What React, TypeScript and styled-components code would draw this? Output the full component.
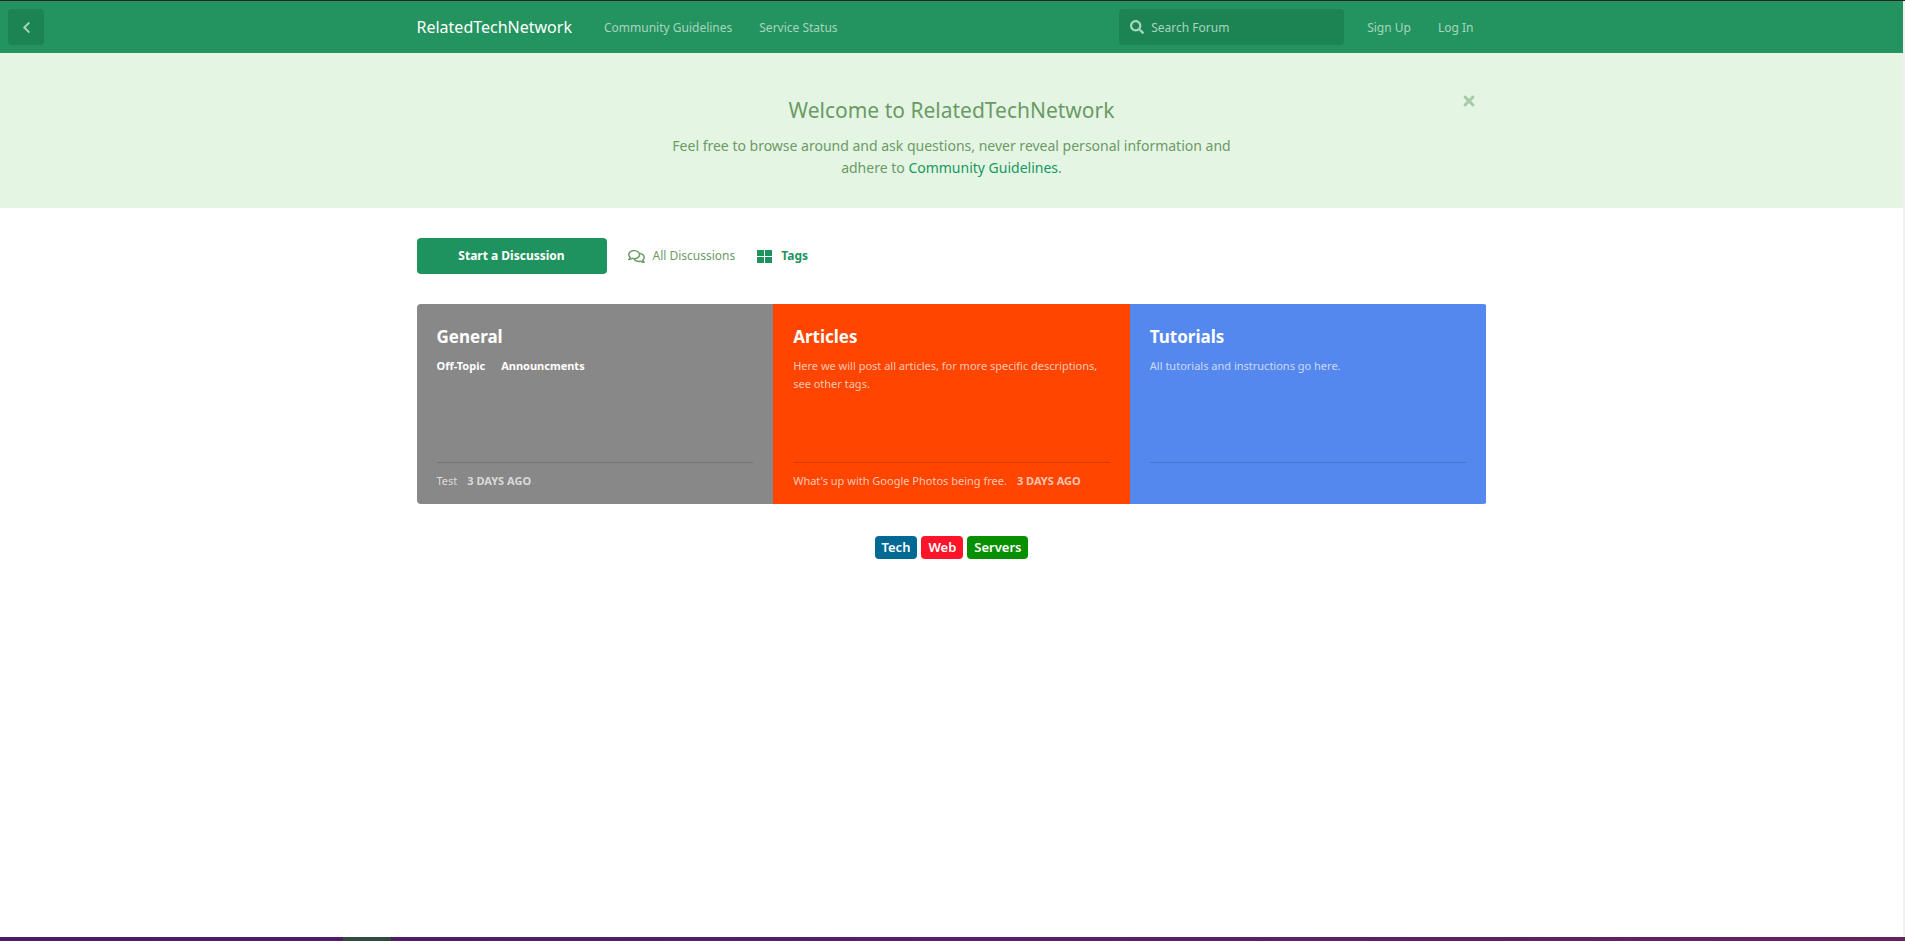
import React from "react";
import styled, { createGlobalStyle, css } from "styled-components";
import { FaChevronLeft, FaSearch, FaTimes, FaRegComments } from "react-icons/fa";

const green = "#1f935f";
const muted = "#6a9b66";
const onHeader = "#a7d4bf";

const GlobalStyle = createGlobalStyle`
  *, *::before, *::after { box-sizing: border-box; }
  body {
    margin: 0;
    background: #fff;
    color: ${muted};
    font-family: "Noto Sans", "Open Sans", sans-serif;
    font-size: 12px;
    line-height: 18px;
  }
  a { color: inherit; text-decoration: none; }
  button, input { font: inherit; }
  h1, h2, p, ul { margin: 0; padding: 0; }
`;

const Window = styled.div`
  display: flex;
  flex-direction: column;
  min-height: 100vh;
  border-top: 1px solid #262626;
`;

const Page = styled.div`
  flex: 1;
  border-right: 2px solid #f0f0f0;
`;

const Taskbar = styled.div`
  display: flex;
  height: 4px;
  padding-left: 18%;
  background: linear-gradient(90deg, #4d1a6a, #521f6c 40%, #66225f);
`;

const TaskbarItem = styled.div`
  width: 48px;
  background: #304a3f;
`;

const Container = styled.div`
  position: relative;
  max-width: 1100px;
  margin: 0 auto;
  padding: 0 15px;
`;

const Header = styled.header`
  position: relative;
  padding: 8px 0;
  background: #239460;
  color: ${onHeader};
`;

const HeaderRow = styled(Container)`
  display: flex;
  align-items: center;
  height: 36px;
  line-height: 36px;
`;

const BackButton = styled.button`
  position: absolute;
  z-index: 1;
  top: 8px;
  left: 8px;
  display: grid;
  place-items: center;
  width: 36px;
  height: 36px;
  padding: 0;
  border: 0;
  border-radius: 4px;
  background: #1c8453;
  color: ${onHeader};
  font-size: 13px;
`;

const Logo = styled.h1`
  margin-right: 32px;
  color: #fff;
  font-size: 16px;
  font-weight: 400;
`;

const HeaderNav = styled.nav`
  display: flex;
  gap: 27px;
  padding-top: 2px;
`;

const Search = styled.label`
  display: flex;
  align-items: center;
  gap: 7px;
  width: 225px;
  height: 36px;
  margin: 0 23px 0 auto;
  padding: 0 11px;
  border-radius: 4px;
  background: #1c8453;
  svg { flex: none; font-size: 14px; }
`;

const SearchInput = styled.input`
  flex: 1;
  min-width: 0;
  padding: 2px 0 0;
  border: 0;
  outline: 0;
  background: none;
  color: #fff;
  &::placeholder { color: ${onHeader}; opacity: 1; }
`;

const Session = styled(HeaderNav)`
  padding-right: 13px;
`;

const Hero = styled.section`
  padding: 43px 0 29px;
  background: #e5f5e3;
  text-align: center;
`;

const HeroTitle = styled.h2`
  margin-bottom: 11px;
  font-size: 21px;
  font-weight: 400;
  line-height: 28px;
`;

const HeroText = styled.p`
  max-width: 600px;
  margin: 0 auto;
  font-size: 14px;
  line-height: 22px;
  a { color: #17985f; }
`;

const CloseButton = styled.button`
  position: absolute;
  top: -13px;
  right: 15px;
  display: grid;
  place-items: center;
  width: 36px;
  height: 36px;
  padding: 0;
  border: 0;
  background: none;
  color: #a8c9a5;
  font-size: 16px;
`;

const Toolbar = styled.div`
  display: flex;
  align-items: center;
  gap: 21px;
  margin: 30px 0;
`;

const StartButton = styled.button`
  width: 190px;
  height: 36px;
  padding: 0;
  border: 0;
  border-radius: 4px;
  background: ${green};
  color: #fff;
  font-weight: 700;
`;

const ViewLink = styled.a<{ $active?: boolean }>`
  display: flex;
  align-items: center;
  gap: 8px;
  line-height: 36px;
  svg { width: 17px; height: 15px; }
  ${(p) => p.$active && css`color: ${green}; font-weight: 700;`}
`;

const Tiles = styled.ul`
  display: grid;
  grid-template-columns: repeat(3, 1fr);
  overflow: hidden;
  border-radius: 4px;
  list-style: none;
`;

const Tile = styled.li<{ $color: string }>`
  display: flex;
  flex-direction: column;
  min-height: 200px;
  padding: 21px 20px 0;
  background: ${(p) => p.$color};
  color: rgba(255, 255, 255, 0.7);
  font-size: 11px;
`;

const TileTitle = styled.h2`
  margin-bottom: 8px;
  color: #fff;
  font-size: 17px;
  font-weight: 700;
  line-height: 24px;
`;

const TileChildren = styled.div`
  display: flex;
  gap: 16px;
  color: #fff;
  font-weight: 700;
`;

const TileFooter = styled.a`
  display: flex;
  gap: 10px;
  height: 42px;
  margin-top: auto;
  padding-top: 9px;
  border-top: 1px solid rgba(0, 0, 0, 0.15);
`;

const Time = styled.time`
  font-weight: 700;
  text-transform: uppercase;
`;

const Cloud = styled.nav`
  display: flex;
  justify-content: center;
  gap: 4px;
  padding: 32px 0;
`;

const Label = styled.a<{ $color: string }>`
  padding: 0 7px;
  border-radius: 4px;
  background: ${(p) => p.$color};
  color: #fff;
  font-size: 13px;
  font-weight: 600;
  line-height: 23px;
`;

const GridIcon = () => (
  <svg viewBox="0 0 17 15" fill="currentColor" shapeRendering="crispEdges" aria-hidden="true">
    <path d="M1 1h7v6H1zM9 1h7v6H9zM1 8h7v6H1zM9 8h7v6H9z" />
  </svg>
);

type TileData = {
  title: string;
  color: string;
  description?: string;
  children?: string[];
  last?: { title: string; time: string };
};

const tiles: TileData[] = [
  { title: "General", color: "#888888", children: ["Off-Topic", "Announcments"], last: { title: "Test", time: "3 days ago" } },
  {
    title: "Articles",
    color: "#ff4500",
    description: "Here we will post all articles, for more specific descriptions, see other tags.",
    last: { title: "What's up with Google Photos being free.", time: "3 days ago" },
  },
  { title: "Tutorials", color: "#5588ee", description: "All tutorials and instructions go here." },
];

const labels = [
  { name: "Tech", color: "#006994" },
  { name: "Web", color: "#ff1429" },
  { name: "Servers", color: "#089000" },
];

export default function App() {
  return (
    <Window>
      <GlobalStyle />
      <Page>
        <Header>
          <BackButton aria-label="Back"><FaChevronLeft /></BackButton>
          <HeaderRow>
            <Logo><a href="#home">RelatedTechNetwork</a></Logo>
            <HeaderNav>
              <a href="#guidelines">Community Guidelines</a>
              <a href="#status">Service Status</a>
            </HeaderNav>
            <Search>
              <FaSearch />
              <SearchInput type="search" placeholder="Search Forum" aria-label="Search Forum" />
            </Search>
            <Session>
              <a href="#signup">Sign Up</a>
              <a href="#login">Log In</a>
            </Session>
          </HeaderRow>
        </Header>

        <Hero>
          <Container>
            <CloseButton aria-label="Dismiss"><FaTimes /></CloseButton>
            <HeroTitle>Welcome to RelatedTechNetwork</HeroTitle>
            <HeroText>
              Feel free to browse around and ask questions, never reveal personal information and adhere to{" "}
              <a href="#guidelines">Community Guidelines</a>.
            </HeroText>
          </Container>
        </Hero>

        <Container as="main">
          <Toolbar>
            <StartButton>Start a Discussion</StartButton>
            <ViewLink href="#all"><FaRegComments />All Discussions</ViewLink>
            <ViewLink href="#tags" $active><GridIcon />Tags</ViewLink>
          </Toolbar>
          <Tiles>
            {tiles.map((t) => (
              <Tile key={t.title} $color={t.color}>
                <TileTitle><a href={`#${t.title}`}>{t.title}</a></TileTitle>
                {t.description && <p>{t.description}</p>}
                {t.children && (
                  <TileChildren>
                    {t.children.map((c) => <a key={c} href={`#${c}`}>{c}</a>)}
                  </TileChildren>
                )}
                <TileFooter href={`#${t.title}-latest`}>
                  {t.last && <><span>{t.last.title}</span><Time>{t.last.time}</Time></>}
                </TileFooter>
              </Tile>
            ))}
          </Tiles>
          <Cloud>
            {labels.map((l) => <Label key={l.name} href={`#${l.name}`} $color={l.color}>{l.name}</Label>)}
          </Cloud>
        </Container>
      </Page>
      <Taskbar><TaskbarItem /></Taskbar>
    </Window>
  );
}
